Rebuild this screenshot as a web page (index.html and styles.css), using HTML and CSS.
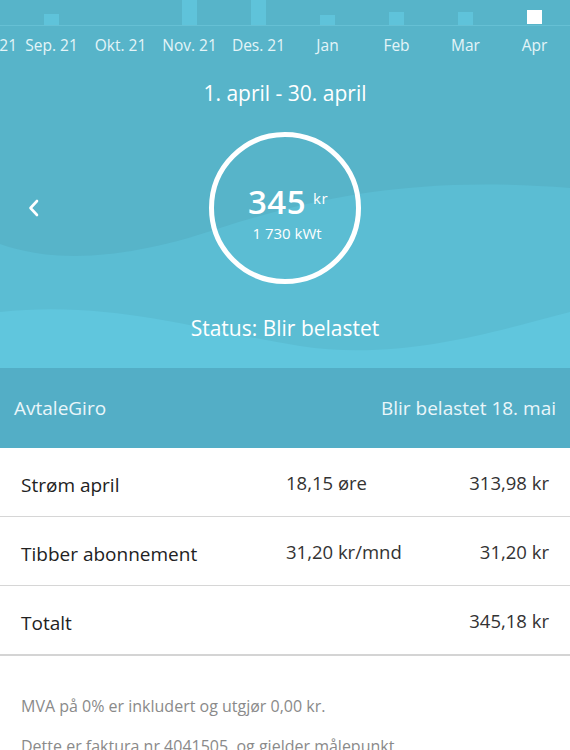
FILE: index.html
```html
<!DOCTYPE html>
<html lang="no">
<head>
  <meta charset="UTF-8">
  <title>Faktura april</title>
  <link rel="stylesheet" href="styles.css">
</head>
<body>
  <div class="header">
    <svg class="waves" viewBox="0 0 570 368" preserveAspectRatio="none">
      <path d="M0,244 C50,262 120,262 220,228 C320,196 420,176 570,188 L570,368 L0,368 Z" fill="#5bbdd3"/>
      <path d="M0,312 C110,300 200,330 300,346 C400,362 500,330 570,312 L570,368 L0,368 Z" fill="#60c6dd"/>
    </svg>

    <div class="chart">
      <div class="slot"></div>
      <div class="slot"><span class="bar" style="height:11px"></span></div>
      <div class="slot"></div>
      <div class="slot"><span class="bar" style="height:26px"></span></div>
      <div class="slot"><span class="bar" style="height:26px"></span></div>
      <div class="slot"><span class="bar" style="height:10px"></span></div>
      <div class="slot"><span class="bar" style="height:13px"></span></div>
      <div class="slot"><span class="bar" style="height:13px"></span></div>
      <div class="slot"><span class="bar active" style="height:14px"></span></div>
    </div>
    <div class="months">
      <span>Aug. 21</span>
      <span>Sep. 21</span>
      <span>Okt. 21</span>
      <span>Nov. 21</span>
      <span>Des. 21</span>
      <span>Jan</span>
      <span>Feb</span>
      <span>Mar</span>
      <span>Apr</span>
    </div>

    <div class="range">1. april - 30. april</div>

    <div class="dial">
      <div class="back">
        <svg width="14" height="20" viewBox="0 0 14 20"><path d="M10 3 L3.5 10 L10 17" fill="none" stroke="#fff" stroke-width="2.6" stroke-linecap="round" stroke-linejoin="round"/></svg>
      </div>
      <div class="ring">
        <div class="amount">345<span class="unit">kr</span></div>
        <div class="usage">1 730 kWt</div>
      </div>
      <div></div>
    </div>

    <div class="status">Status: Blir belastet</div>
  </div>

  <div class="band">
    <span>AvtaleGiro</span>
    <span>Blir belastet 18. mai</span>
  </div>

  <div class="lines">
    <div class="line">
      <span class="name">Strøm april</span>
      <span class="rate">18,15 øre</span>
      <span class="sum">313,98 kr</span>
    </div>
    <div class="line">
      <span class="name">Tibber abonnement</span>
      <span class="rate">31,20 kr/mnd</span>
      <span class="sum">31,20 kr</span>
    </div>
    <div class="line total">
      <span class="name">Totalt</span>
      <span class="rate"></span>
      <span class="sum">345,18 kr</span>
    </div>
  </div>

  <div class="notes">
    <p>MVA på 0% er inkludert og utgjør 0,00 kr.</p>
    <p>Dette er faktura nr 4041505, og gjelder målepunkt</p>
  </div>
</body>
</html>
```

FILE: styles.css
```css
body { margin: 0; font-family: "Open Sans", Lato, sans-serif; background: #fff; color: #222; overflow: hidden; }

.header { position: relative; background: #57b4c9; color: #fff; padding-bottom: 27px; overflow: hidden; }
.waves { position: absolute; left: 0; top: 0; width: 100%; height: 100%; z-index: 0; }
.header > div { position: relative; z-index: 1; }

.chart { display: flex; height: 25px; margin-left: -52px; border-bottom: 1px solid #66c0d4; align-items: flex-end; }
.slot { flex: 0 0 69px; display: flex; justify-content: center; align-items: flex-end; }
.bar { width: 15px; background: #5fc3da; }
.bar.active { background: #fff; margin-bottom: 1px; }

.months { display: flex; margin-left: -52px; height: 38px; line-height: 38px; font-size: 15.5px; color: #e4f4f8; }
.months span { flex: 0 0 69px; text-align: center; white-space: nowrap; }
.months span:first-child { text-align: right; }

.range { margin-top: 16px; text-align: center; font-size: 21px; line-height: 26px; }

.dial { display: grid; grid-template-columns: 1fr 152px 1fr; align-items: center; margin-top: 26px; }
.back { padding-left: 27px; padding-top: 4px; }
.ring { width: 142px; height: 142px; border: 5px solid #fff; border-radius: 50%; display: flex; flex-direction: column; align-items: center; justify-content: center; }
.amount { font-size: 33px; font-weight: 600; line-height: 34px; margin-top: 8px; padding-left: 6px; letter-spacing: 0.5px; }
.unit { font-size: 15px; font-weight: 400; vertical-align: 10px; margin-left: 7px; }
.usage { font-size: 15px; margin-top: 4px; padding-left: 4px; }

.status { margin-top: 31px; text-align: center; font-size: 21px; line-height: 26px; }

.band { display: flex; justify-content: space-between; align-items: center; height: 80px; padding: 0 14px 0 14px; background: #53aec6; color: #eaf6fa; font-size: 19px; }

.lines { border-bottom: 2px solid #d4d4d4; }
.line { display: grid; grid-template-columns: 265px 150px 1fr; align-items: center; height: 68px; padding: 0 21px; border-bottom: 1px solid #d6d6d6; }
.line.total { border-bottom: none; }
.name { font-size: 19px; padding-top: 6px; color: #222; }
.rate { font-size: 18.5px; color: #333; }
.sum { font-size: 18.5px; color: #333; text-align: right; }

.notes { padding: 39px 21px 0; color: #8a8a8a; font-size: 16px; }
.notes p { margin: 0 0 18px; line-height: 22px; }
```
